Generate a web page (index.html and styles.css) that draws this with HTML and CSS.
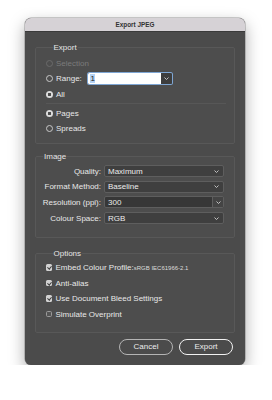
FILE: index.html
```html
<!DOCTYPE html>
<html>
<head>
    <title>Export JPEG</title>
    <link rel="stylesheet" href="styles.css">
</head>
<body>
    <div class="window">
        <div class="titlebar">Export JPEG</div>
        <div class="panel">

            <!-- Export -->
            <fieldset class="group group-export">
                <legend>Export</legend>
                <div class="row disabled"><span class="radio"></span><span>Selection</span></div>
                <div class="row">
                    <span class="radio"></span><span class="range-label">Range:</span>
                    <span class="combo focus">
                        <span class="combo-field"><span class="sel">1</span></span>
                        <span class="combo-btn"><svg width="5" height="3" viewBox="0 0 5 3"><polyline points="0.5,0.5 2.5,2.5 4.5,0.5" fill="none" stroke="#cfcfcf" stroke-width="0.9"/></svg></span>
                    </span>
                </div>
                <div class="row"><span class="radio on"></span><span>All</span></div>
                <div class="divider"></div>
                <div class="row"><span class="radio on"></span><span>Pages</span></div>
                <div class="row"><span class="radio"></span><span>Spreads</span></div>
            </fieldset>

            <!-- Image -->
            <fieldset class="group group-image">
                <legend>Image</legend>
                <div class="frow">
                    <span class="flabel">Quality:</span>
                    <span class="select"><span class="value">Maximum</span><svg width="5" height="3" viewBox="0 0 5 3"><polyline points="0.5,0.5 2.5,2.5 4.5,0.5" fill="none" stroke="#cfcfcf" stroke-width="0.9"/></svg></span>
                </div>
                <div class="frow">
                    <span class="flabel">Format Method:</span>
                    <span class="select"><span class="value">Baseline</span><svg width="5" height="3" viewBox="0 0 5 3"><polyline points="0.5,0.5 2.5,2.5 4.5,0.5" fill="none" stroke="#cfcfcf" stroke-width="0.9"/></svg></span>
                </div>
                <div class="frow">
                    <span class="flabel">Resolution (ppi):</span>
                    <span class="select combo-select"><span class="value">300</span><span class="select-btn"><svg width="5" height="3" viewBox="0 0 5 3"><polyline points="0.5,0.5 2.5,2.5 4.5,0.5" fill="none" stroke="#cfcfcf" stroke-width="0.9"/></svg></span></span>
                </div>
                <div class="frow">
                    <span class="flabel">Colour Space:</span>
                    <span class="select"><span class="value">RGB</span><svg width="5" height="3" viewBox="0 0 5 3"><polyline points="0.5,0.5 2.5,2.5 4.5,0.5" fill="none" stroke="#cfcfcf" stroke-width="0.9"/></svg></span>
                </div>
            </fieldset>

            <!-- Options -->
            <fieldset class="group group-options">
                <legend>Options</legend>
                <div class="row"><span class="check on"></span><span>Embed Colour Profile:<small class="profile">sRGB IEC61966-2.1</small></span></div>
                <div class="row"><span class="check on"></span><span>Anti-alias</span></div>
                <div class="row"><span class="check on"></span><span>Use Document Bleed Settings</span></div>
                <div class="row"><span class="check"></span><span>Simulate Overprint</span></div>
            </fieldset>

            <div class="buttons">
                <button class="btn">Cancel</button>
                <button class="btn default">Export</button>
            </div>
        </div>
    </div>
</body>
</html>
```

FILE: styles.css
```css
body {
    margin: 0;
    padding: 0;
    background: #ffffff;
    font-family: "Liberation Sans", Arial, sans-serif;
}

.window {
    margin: 18px 0 0 25px;
    width: 220px;
    border-radius: 6px;
    overflow: hidden;
    background: #4b4b4b;
    box-shadow: 0 6px 16px rgba(0, 0, 0, 0.35), 0 0 0 0.5px rgba(0, 0, 0, 0.35);
}

.titlebar {
    height: 13.5px;
    line-height: 14px;
    background: #d6d2d6;
    border-bottom: 1px solid #3a3a3a;
    box-sizing: border-box;
    text-align: center;
    font-size: 6.4px;
    font-weight: bold;
    color: #333333;
}

.panel {
    padding: 11px 10px 10px 10px;
}

/* group boxes */
.group {
    margin: 0;
    min-width: 0;
    border: 1px solid #585858;
    border-radius: 2px;
    background: #4d4d4d;
    color: #e8e8e8;
    font-size: 8px;
}

.group legend {
    margin-left: 7px;
    padding: 0 1px;
    line-height: 10px;
    font-size: 8px;
    color: #e6e6e6;
}

.group-export {
    padding: 3px 10px 6.5px 9.5px;
}

.group-image {
    margin-top: 7.5px;
    padding: 2px 10px 11px 0;
}

.group-options {
    margin-top: 11px;
    padding: 1px 10px 10.5px 9.5px;
}

.row {
    display: flex;
    align-items: center;
    gap: 3.5px;
    height: 15.5px;
}

.row.disabled {
    color: #7b7b7b;
}

.divider {
    height: 1px;
    margin: 1.25px -2px 1.25px 0;
    background: #575757;
}

/* radio buttons */
.radio {
    width: 7px;
    height: 7px;
    box-sizing: border-box;
    border: 0.8px solid #c8c8c8;
    border-radius: 50%;
    flex: none;
}

.disabled .radio {
    border-color: #6a6a6a;
}

.radio.on {
    border: none;
    background: radial-gradient(circle, #4b4b4b 0 1.4px, #dcdcdc 1.8px);
}

/* check boxes */
.check {
    width: 6.5px;
    height: 6.5px;
    box-sizing: border-box;
    border: 0.8px solid #9a9a9a;
    border-radius: 1.5px;
    background: #555555;
    flex: none;
    position: relative;
}

.check.on {
    border: none;
    background: #d2d2d2;
}

.check.on::after {
    content: "";
    position: absolute;
    left: 2.2px;
    top: 0.8px;
    width: 1.5px;
    height: 3.2px;
    border-right: 1px solid #3c3c3c;
    border-bottom: 1px solid #3c3c3c;
    transform: rotate(40deg);
}

.profile {
    font-size: 6px;
    color: #dcdcdc;
}

/* range combo */
.range-label {
    width: 28.5px;
}

.combo {
    display: flex;
    width: 84px;
    height: 11px;
    border-radius: 1.5px;
    overflow: hidden;
}

.combo.focus {
    box-shadow: 0 0 0 1px #7ea6d4;
}

.combo-field {
    flex: 1;
    background: #ffffff;
    display: flex;
    align-items: center;
    padding-left: 2px;
}

.sel {
    background: #b4d2f4;
    color: #222222;
    line-height: 9px;
    padding: 0 0.5px;
}

.combo-btn {
    width: 11px;
    background: #3d3d3d;
    display: flex;
    align-items: center;
    justify-content: center;
}

/* image settings */
.frow {
    display: flex;
    align-items: center;
    gap: 3px;
    height: 15.6px;
}

.flabel {
    width: 65px;
    text-align: right;
    white-space: nowrap;
}

.select {
    display: flex;
    align-items: center;
    justify-content: space-between;
    width: 120px;
    height: 12px;
    box-sizing: border-box;
    padding: 0 4px 0 3px;
    background: #3f3f3f;
    border: 1px solid #5e5e5e;
    border-radius: 2px;
    color: #ececec;
}

.combo-select {
    padding-right: 0;
    background: #373737;
}

.select-btn {
    width: 10px;
    height: 100%;
    border-left: 1px solid #5e5e5e;
    background: #444444;
    display: flex;
    align-items: center;
    justify-content: center;
}

/* buttons */
.buttons {
    display: flex;
    justify-content: flex-end;
    gap: 6px;
    margin-top: 5.5px;
    padding-right: 2px;
}

.btn {
    width: 54px;
    height: 16px;
    padding: 0;
    border: 1px solid #b4b4b4;
    border-radius: 8px;
    background: #4b4b4b;
    color: #ececec;
    font-family: "Liberation Sans", Arial, sans-serif;
    font-size: 8px;
}

.btn.default {
    border: 1.5px solid #f2f2f2;
}
```
